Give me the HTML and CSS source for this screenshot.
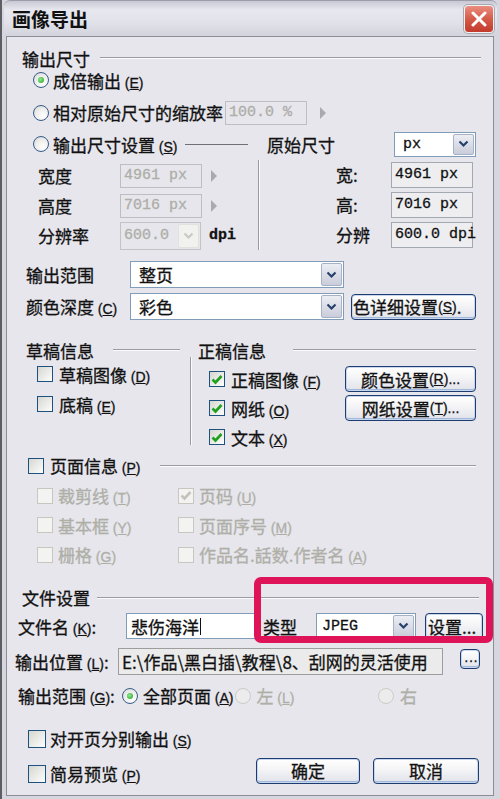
FILE: index.html
```html
<!DOCTYPE html>
<html lang="zh-CN">
<head>
  <meta charset="UTF-8" />
  <title>画像导出</title>
  <link rel="stylesheet" href="styles.css">
</head>
<body>
<div class="window">
  <div class="titlebar">
    <span class="title">画像导出</span>
    <span class="close">
      <svg width="16" height="16" viewBox="0 0 16 16"><path d="M2 2 L14 14 M14 2 L2 14" stroke="#fff" stroke-width="3" stroke-linecap="round"/></svg>
    </span>
  </div>

  <div class="panel">
    <!-- 输出尺寸 -->
    <div class="row sec sec-size"><span>输出尺寸</span><i class="rule"></i></div>
    <div class="row opt opt-1"><span class="radio on"></span><span>成倍输出 <span class="key">(<u>E</u>)</span></span></div>
    <div class="row opt opt-2">
      <span class="radio"></span>
      <span class="lbl-scale">相对原始尺寸的缩放率</span>
      <span class="field dis w82">100.0 %</span>
      <span class="tri"></span>
    </div>
    <div class="row opt opt-3">
      <span class="radio"></span>
      <span class="lbl-set">输出尺寸设置 <span class="key">(<u>S</u>)</span></span>
      <i class="thin"></i>
      <span class="orig">原始尺寸</span>
      <span class="select sel-px"><span class="val mono">px</span><span class="arrow"><svg width="11" height="8" viewBox="0 0 11 8"><path d="M1.5 1.5 L5.5 5.5 L9.5 1.5" fill="none" stroke="#27406b" stroke-width="2.2"/></svg></span></span>
    </div>

    <div class="sizes">
      <div class="size-left">
        <div class="row"><span class="lab">宽度</span><span class="field dis w82">4961 px</span><span class="tri"></span></div>
        <div class="row"><span class="lab">高度</span><span class="field dis w82">7016 px</span><span class="tri"></span></div>
        <div class="row">
          <span class="lab">分辨率</span>
          <span class="select dis sel-dpi"><span class="val mono">600.0</span><span class="arrow"><svg width="11" height="8" viewBox="0 0 11 8"><path d="M1.5 1.5 L5.5 5.5 L9.5 1.5" fill="none" stroke="#c9c9c4" stroke-width="2.2"/></svg></span></span>
          <span class="mono dpi">dpi</span>
        </div>
      </div>
      <i class="vline vline-size"></i>
      <div class="size-right">
        <div class="row"><span class="lab-r">宽:</span><span class="field ro w82">4961 px</span></div>
        <div class="row"><span class="lab-r">高:</span><span class="field ro w82">7016 px</span></div>
        <div class="row"><span class="lab-r">分辨</span><span class="field ro w82">600.0 dpi</span></div>
      </div>
    </div>

    <div class="row line-row range-row">
      <span class="lab-w">输出范围</span>
      <span class="select sel-wide"><span class="val">整页</span><span class="arrow"><svg width="11" height="8" viewBox="0 0 11 8"><path d="M1.5 1.5 L5.5 5.5 L9.5 1.5" fill="none" stroke="#27406b" stroke-width="2.2"/></svg></span></span>
    </div>
    <div class="row line-row depth-row">
      <span class="lab-w">颜色深度 <span class="key">(<u>C</u>)</span></span>
      <span class="select sel-wide"><span class="val">彩色</span><span class="arrow"><svg width="11" height="8" viewBox="0 0 11 8"><path d="M1.5 1.5 L5.5 5.5 L9.5 1.5" fill="none" stroke="#27406b" stroke-width="2.2"/></svg></span></span>
      <span class="btn btn-detail">色详细设置 <span class="key">(<u>S</u>)</span>.</span>
    </div>

    <!-- 草稿 / 正稿 -->
    <div class="info">
      <div class="draft">
        <div class="row sub"><span>草稿信息</span><i class="rule r-draft"></i></div>
        <div class="row cb-row cb-d1"><span class="check"></span><span>草稿图像 <span class="key">(<u>D</u>)</span></span></div>
        <div class="row cb-row cb-d2"><span class="check"></span><span>底稿 <span class="key">(<u>E</u>)</span></span></div>
      </div>
      <i class="vline vline-info"></i>
      <div class="final">
        <div class="row sub"><span>正稿信息</span><i class="rule r-final"></i></div>
        <div class="row cb-row cb-f1">
          <span class="check"><svg width="12" height="11" viewBox="0 0 12 11"><path d="M1.5 5.5 L4.5 8.5 L10.5 2" fill="none" stroke="#1fa11f" stroke-width="2.6"/></svg></span>
          <span>正稿图像 <span class="key">(<u>F</u>)</span></span>
          <span class="btn btn-set">颜色设置 <span class="key">(<u>R</u>)...</span></span>
        </div>
        <div class="row cb-row cb-f2">
          <span class="check"><svg width="12" height="11" viewBox="0 0 12 11"><path d="M1.5 5.5 L4.5 8.5 L10.5 2" fill="none" stroke="#1fa11f" stroke-width="2.6"/></svg></span>
          <span>网纸 <span class="key">(<u>O</u>)</span></span>
          <span class="btn btn-set">网纸设置 <span class="key">(<u>T</u>)...</span></span>
        </div>
        <div class="row cb-row cb-f3">
          <span class="check"><svg width="12" height="11" viewBox="0 0 12 11"><path d="M1.5 5.5 L4.5 8.5 L10.5 2" fill="none" stroke="#1fa11f" stroke-width="2.6"/></svg></span>
          <span>文本 <span class="key">(<u>X</u>)</span></span>
        </div>
      </div>
    </div>

    <div class="row page-row"><span class="check"></span><span>页面信息 <span class="key">(<u>P</u>)</span></span><i class="rule r-page"></i></div>
    <div class="page-grid">
      <div class="row dim"><span class="check off"></span><span>裁剪线 <span class="key">(<u>T</u>)</span></span></div>
      <div class="row dim"><span class="check off"><svg width="12" height="11" viewBox="0 0 12 11"><path d="M1.5 5.5 L4.5 8.5 L10.5 2" fill="none" stroke="#c4c4bc" stroke-width="2.6"/></svg></span><span>页码 <span class="key">(<u>U</u>)</span></span></div>
      <div class="row dim"><span class="check off"></span><span>基本框 <span class="key">(<u>Y</u>)</span></span></div>
      <div class="row dim"><span class="check off"></span><span>页面序号 <span class="key">(<u>M</u>)</span></span></div>
      <div class="row dim"><span class="check off"></span><span>栅格 <span class="key">(<u>G</u>)</span></span></div>
      <div class="row dim"><span class="check off"></span><span>作品名.話数.作者名 <span class="key">(<u>A</u>)</span></span></div>
    </div>

    <!-- 文件设置 -->
    <div class="row sec sec-file"><span>文件设置</span><i class="rule r-file"></i></div>
    <div class="row name-row">
      <span class="lab-name">文件名 <span class="key">(<u>K</u>)</span>:</span>
      <span class="field name-field">悲伤海洋<i class="caret"></i></span>
      <span class="lab-type">类型</span>
      <span class="select sel-type"><span class="val mono">JPEG</span><span class="arrow"><svg width="11" height="8" viewBox="0 0 11 8"><path d="M1.5 1.5 L5.5 5.5 L9.5 1.5" fill="none" stroke="#27406b" stroke-width="2.2"/></svg></span></span>
      <span class="btn btn-type">设置...</span>
    </div>
    <div class="row loc-row">
      <span class="lab-loc">输出位置 <span class="key">(<u>L</u>)</span>:</span>
      <span class="path">E:\作品\黑白插\教程\8、刮网的灵活使用</span>
      <span class="btn btn-dots">...</span>
    </div>
    <div class="row pages-row">
      <span class="lab-pages">输出范围 <span class="key">(<u>G</u>)</span>:</span>
      <span class="radio on"></span>
      <span class="lbl-all">全部页面 <span class="key">(<u>A</u>)</span></span>
      <span class="side side-left"><span class="radio off"></span><span class="dim-text">左 <span class="key">(<u>L</u>)</span></span></span>
      <span class="side side-right"><span class="radio off"></span><span class="dim-text">右</span></span>
    </div>

    <div class="bottom">
      <div class="bottom-checks">
        <div class="row"><span class="check big"></span><span>对开页分别输出 <span class="key">(<u>S</u>)</span></span></div>
        <div class="row"><span class="check big"></span><span>简易预览 <span class="key">(<u>P</u>)</span></span></div>
      </div>
      <div class="actions">
        <span class="btn btn-ok">确定</span>
        <span class="btn btn-cancel">取消</span>
      </div>
    </div>

    <div class="mark"></div>
  </div>
</div>
</body>
</html>
```

FILE: styles.css
```css
* {
  box-sizing: border-box;
}
body {
  margin: 0;
  font-family: "Noto Sans CJK SC", sans-serif;
  font-size: 17px;
  color: #111;
  background: #d6d6de;
}
.window {
  width: 500px;
  height: 799px;
  padding: 0 6px 3px 6px;
  background: linear-gradient(90deg, #5d5d64 0, #5d5d64 2px, #d6d6de 2px);
  display: flex;
  flex-direction: column;
}
.titlebar {
  height: 36px;
  margin: 0 -3px 0 -2px;
  padding: 0 3px 0 8px;
  border-radius: 6px 6px 0 0;
  border-top: 1px solid #9d9daa;
  background: linear-gradient(#c8c8d4 0, #e7e7ef 25%, #e2e2ea 60%, #d3d3dd 100%);
  display: flex;
  align-items: center;
  justify-content: space-between;
}
.title {
  font-size: 19px;
  font-weight: bold;
  color: #111;
}
.close {
  width: 30px;
  height: 28px;
  border: 1px solid #f4f4f4;
  border-radius: 4px;
  background: linear-gradient(#ea8e80, #d65a48 50%, #c23b2c);
  box-shadow: 0 0 0 1px #a7a7b2;
  display: grid;
  place-items: center;
}
.panel {
  flex: 1;
  position: relative;
  border: 1px solid #8d8d98;
  background: #e6e6ec;
  display: flex;
  flex-direction: column;
  -webkit-text-stroke: 0.3px currentColor;
}
.row {
  display: flex;
  align-items: center;
  white-space: nowrap;
}
.key {
  font-family: "Liberation Sans", sans-serif;
  font-size: 14px;
}
.mono {
  font-family: "Liberation Mono", monospace;
  font-size: 15px;
}
.rule {
  flex: 1;
  height: 2px;
  border-top: 1px solid #999aa4;
  border-bottom: 1px solid #fbfbfd;
}
.thin {
  width: 63px;
  height: 1px;
  background: #6f6f78;
}
.vline {
  width: 2px;
  border-left: 1px solid #999aa4;
  border-right: 1px solid #fbfbfd;
}

/* controls */
.radio {
  flex: none;
  width: 16px;
  height: 16px;
  border-radius: 50%;
  border: 1px solid #355c8c;
  background: radial-gradient(circle at 65% 70%, #fff 0, #ececea 55%, #d2d2cc 100%);
  display: grid;
  place-items: center;
}
.radio.on::after {
  content: "";
  width: 6px;
  height: 6px;
  border-radius: 50%;
  background: radial-gradient(circle at 40% 40%, #8fea8f, #1e9e1e);
}
.radio.off {
  border-color: #cbcbc5;
  background: #ececec;
}
.check {
  flex: none;
  width: 16px;
  height: 16px;
  border: 1px solid #1c5180;
  background: linear-gradient(135deg, #d6d6d0, #fdfdfd);
  display: grid;
  place-items: center;
}
.check.big {
  width: 18px;
  height: 18px;
}
.check.off {
  border-color: #c7c7c0;
  background: #f3f3f1;
}
.field {
  height: 24px;
  border: 1px solid #7f9db9;
  background: #fff;
  font-family: "Liberation Mono", monospace;
  font-size: 15px;
  padding-left: 3px;
  display: flex;
  align-items: center;
}
.field.dis {
  border-color: #bdbdc2;
  background: transparent;
  color: #aeaea8;
}
.field.ro {
  height: 26px;
  border-color: #a3a9b3;
  background: #eeeef1;
}
.w82 {
  width: 82px;
}
.tri {
  width: 0;
  height: 0;
  margin-left: 9px;
  border-left: 6px solid #a9a9b1;
  border-top: 6px solid transparent;
  border-bottom: 6px solid transparent;
}
.select {
  display: flex;
  height: 27px;
  border: 1px solid #7f9db9;
  background: #fff;
}
.select .val {
  flex: 1;
  display: flex;
  align-items: center;
  padding-left: 8px;
}
.select .arrow {
  width: 21px;
  margin: 1px;
  border: 1px solid #a9b1c6;
  border-radius: 2px;
  background: linear-gradient(#eceef4, #c9cdda);
  display: grid;
  place-items: center;
}
.select.dis {
  border-color: #c3c3c3;
  background: transparent;
  color: #aeaea8;
}
.select.dis .arrow {
  border-color: #e2e2dc;
  background: #f1f1ef;
}
.btn {
  display: flex;
  align-items: center;
  justify-content: center;
  white-space: nowrap;
  overflow: hidden;
  border: 1px solid #1d3d70;
  border-radius: 4px;
  background: linear-gradient(#ffffff 0, #f4f4f6 45%, #dfe2ea 100%);
  box-shadow: inset 0 0 0 1px #c8d6ee, inset 0 -2px 0 #a4b8da;
}

/* 输出尺寸 */
.sec {
  height: 20px;
  padding-left: 15px;
}
.sec-size {
  margin-top: 11px;
  padding-right: 12px;
}
.sec-size .rule {
  margin-left: 10px;
}
.opt {
  padding-left: 26px;
  gap: 4px;
}
.opt-1 {
  margin-top: 1px;
  height: 22px;
}
.opt-2 {
  margin-top: 9px;
  height: 25px;
}
.opt-3 {
  margin-top: 6px;
  height: 26px;
}
.lbl-scale {
  width: 170px;
  margin-right: -2px;
}
.lbl-set {
  width: 128px;
}
.orig {
  margin-left: 15px;
}
.sel-px {
  width: 82px;
  height: 25px;
  margin-left: auto;
  margin-right: 17px;
}
.sizes {
  display: flex;
  height: 91px;
  margin-top: 3px;
}
.size-left {
  width: 251px;
  display: grid;
  grid-template-rows: repeat(3, 27px);
  row-gap: 3px;
  padding-top: 2px;
}
.size-left .row {
  padding-left: 31px;
}
.lab {
  width: 82px;
}
.sel-dpi {
  width: 81px;
  height: 28px;
}
.sel-dpi .val {
  padding-left: 3px;
}
.dpi {
  margin-left: 8px;
  font-weight: bold;
}
.vline-size {
  height: 90px;
}
.size-right {
  flex: 1;
  display: grid;
  grid-template-rows: repeat(3, 27px);
  row-gap: 3px;
  padding-top: 1px;
  padding-left: 76px;
}
.lab-r {
  width: 55px;
}
.line-row {
  height: 27px;
  padding-left: 19px;
}
.range-row {
  margin-top: 10px;
}
.depth-row {
  margin-top: 5px;
}
.lab-w {
  width: 104px;
}
.sel-wide {
  width: 214px;
}
.btn-detail {
  width: 125px;
  height: 26px;
  margin-left: 7px;
  justify-content: flex-start;
  padding-left: 1px;
}

/* 草稿 / 正稿 */
.info {
  display: flex;
  height: 110px;
  margin-top: 20px;
}
.draft {
  width: 183px;
  padding: 0 10px 0 19px;
}
.sub {
  height: 20px;
}
.r-draft {
  margin-left: 19px;
}
.cb-row {
  padding-left: 11px;
  gap: 6px;
}
.cb-d1 {
  height: 24px;
  margin-top: 2px;
}
.cb-d2 {
  height: 24px;
  margin-top: 6px;
}
.vline-info {
  height: 88px;
  margin-top: 17px;
}
.final {
  flex: 1;
  padding: 0 17px 0 6px;
}
.r-final {
  margin-left: 27px;
}
.cb-f1 {
  height: 26px;
  margin-top: 6px;
}
.cb-f2 {
  height: 26px;
  margin-top: 3px;
}
.cb-f3 {
  height: 24px;
  margin-top: 4px;
}
.btn-set {
  width: 131px;
  height: 26px;
  margin-left: auto;
}
.page-row {
  height: 21px;
  margin-top: 5px;
  padding: 0 17px 0 21px;
  gap: 6px;
}
.r-page {
  margin-left: 13px;
}
.page-grid {
  display: grid;
  grid-template-columns: 141px 1fr;
  grid-auto-rows: 29.5px;
  margin-top: 5px;
  padding-left: 30px;
}
.dim {
  gap: 5px;
  color: #afafa8;
}
.dim-text {
  color: #afafa8;
}

/* 文件设置 */
.sec-file {
  margin-top: 18px;
  padding-right: 14px;
}
.r-file {
  margin-left: 7px;
}
.name-row {
  height: 29px;
  margin-top: 4px;
  padding-left: 11px;
}
.lab-name {
  width: 108px;
}
.name-field {
  width: 131px;
  height: 26px;
  font-family: "Noto Sans CJK SC", sans-serif;
  font-size: 17px;
  padding-left: 4px;
}
.caret {
  width: 1px;
  height: 17px;
  margin-left: 1px;
  background: #111;
}
.lab-type {
  width: 53px;
  margin-left: 6px;
}
.sel-type {
  width: 100px;
}
.sel-type .val {
  padding-left: 5px;
}
.btn-type {
  width: 58px;
  height: 27px;
  margin-left: 9px;
  justify-content: flex-start;
  padding-left: 2px;
}
.loc-row {
  height: 28px;
  margin-top: 7px;
  padding-left: 8px;
}
.lab-loc {
  width: 103px;
}
.path {
  width: 325px;
  height: 27px;
  padding-left: 3px;
  overflow: hidden;
  border: 1px solid #9d9d9d;
  background: #ebebeb;
  display: flex;
  align-items: center;
}
.btn-dots {
  align-self: flex-start;
  width: 20px;
  height: 20px;
  margin: 1px 0 0 17px;
  font-family: "Liberation Mono", monospace;
  font-size: 11px;
  letter-spacing: -2px;
}
.pages-row {
  height: 24px;
  margin-top: 8px;
  padding-left: 11px;
}
.lab-pages {
  width: 104px;
}
.lbl-all {
  margin-left: 5px;
}
.side {
  display: flex;
  align-items: center;
  gap: 6px;
}
.side-left {
  margin-left: 1px;
}
.side-right {
  width: 115px;
  margin-left: auto;
}

/* bottom */
.bottom {
  display: flex;
  margin-top: 19px;
  padding: 0 14px 0 21px;
}
.bottom-checks {
  flex: 1;
  display: flex;
  flex-direction: column;
  gap: 11px;
}
.bottom-checks .row {
  height: 24px;
  gap: 4px;
}
.actions {
  display: flex;
  gap: 13px;
  margin-top: 31px;
}
.btn-ok {
  width: 104px;
  height: 26px;
}
.btn-cancel {
  width: 106px;
  height: 26px;
}

/* highlight drawn over the dialog */
.mark {
  position: absolute;
  left: 247px;
  top: 540px;
  width: 239px;
  height: 66px;
  border: 7px solid #df1458;
  border-radius: 7px;
}
```
